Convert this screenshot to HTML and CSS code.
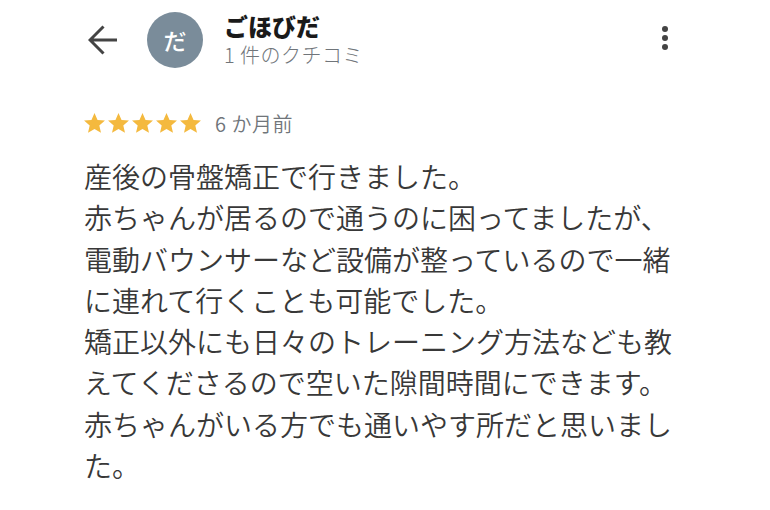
FILE: index.html
```html
<!DOCTYPE html>
<html lang="ja">
<head>
    <meta charset="UTF-8">
    <title>クチコミ</title>
    <link rel="stylesheet" href="styles.css">
</head>
<body>
    <div class="review-page">
        <header class="review-header">
            <button class="back-btn" aria-label="戻る">
                <svg width="30" height="30" viewBox="0 0 30 30"><path d="M2 15H29M15.5 1.5L2 15l13.5 13.5" fill="none" stroke="#444" stroke-width="3"/></svg>
            </button>
            <div class="avatar">だ</div>
            <div class="author">
                <div class="author-name">ごほびだ</div>
                <div class="author-meta">1 件のクチコミ</div>
            </div>
            <button class="more-btn" aria-label="メニュー">
                <span></span><span></span><span></span>
            </button>
        </header>

        <div class="rating-row">
            <div class="stars">
                <svg viewBox="1 1.5 22 22"><path d="M12 2.5l2.9 6.6 7.1.6-5.4 4.7 1.6 7-6.2-3.7-6.2 3.7 1.6-7L2 9.7l7.1-.6z"/></svg>
                <svg viewBox="1 1.5 22 22"><path d="M12 2.5l2.9 6.6 7.1.6-5.4 4.7 1.6 7-6.2-3.7-6.2 3.7 1.6-7L2 9.7l7.1-.6z"/></svg>
                <svg viewBox="1 1.5 22 22"><path d="M12 2.5l2.9 6.6 7.1.6-5.4 4.7 1.6 7-6.2-3.7-6.2 3.7 1.6-7L2 9.7l7.1-.6z"/></svg>
                <svg viewBox="1 1.5 22 22"><path d="M12 2.5l2.9 6.6 7.1.6-5.4 4.7 1.6 7-6.2-3.7-6.2 3.7 1.6-7L2 9.7l7.1-.6z"/></svg>
                <svg viewBox="1 1.5 22 22"><path d="M12 2.5l2.9 6.6 7.1.6-5.4 4.7 1.6 7-6.2-3.7-6.2 3.7 1.6-7L2 9.7l7.1-.6z"/></svg>
            </div>
            <span class="review-date">6 か月前</span>
        </div>

        <p class="review-text">産後の骨盤矯正で行きました。<br>赤ちゃんが居るので通うのに困ってましたが、<br>電動バウンサーなど設備が整っているので一緒に連れて行くことも可能でした。<br>矯正以外にも日々のトレーニング方法なども教えてくださるので空いた隙間時間にできます。<br>赤ちゃんがいる方でも通いやす所だと思いました。</p>
    </div>
</body>
</html>
```

FILE: styles.css
```css
:root {
    --text-dark: #383838;
    --text-grey: #70757a;
    --avatar-bg: #7a8c9a;
    --star-yellow: #f4b93e;
}

body, html {
    margin: 0;
    padding: 0;
    background: #ffffff;
    font-family: "Noto Sans CJK JP", "Noto Sans", sans-serif;
    color: var(--text-dark);
}

.review-page {
    padding: 12px 0 0 84px;
    width: 600px;
}

.review-header {
    display: flex;
    align-items: center;
    height: 56px;
}

.back-btn {
    background: none;
    border: none;
    padding: 0;
    margin: 0 28px 0 4px;
    width: 30px;
    height: 30px;
    display: flex;
}

.avatar {
    width: 56px;
    height: 56px;
    border-radius: 50%;
    background-color: var(--avatar-bg);
    color: #ffffff;
    font-size: 23px;
    font-weight: 500;
    display: flex;
    align-items: center;
    justify-content: center;
    flex-shrink: 0;
    margin-left: 1px;
}

.author {
    margin-left: 21px;
    flex: 1;
    margin-top: -2px;
    display: flex;
    flex-direction: column;
    gap: 2px;
}

.author-name {
    font-size: 24px;
    font-weight: 900;
    color: #1a1a1a;
    line-height: 30px;
}

.author-meta {
    font-size: 20px;
    font-weight: 300;
    color: var(--text-grey);
    line-height: 24px;
    letter-spacing: 0.5px;
}

.more-btn {
    background: none;
    border: none;
    padding: 0;
    display: flex;
    flex-direction: column;
    gap: 3px;
    margin-right: 16px;
    margin-top: -4px;
}

.more-btn span {
    width: 6px;
    height: 6px;
    border-radius: 50%;
    background: #444444;
}

.rating-row {
    display: flex;
    align-items: center;
    margin-top: 41px;
    height: 28px;
}

.stars {
    display: flex;
    gap: 1px;
    margin-left: -1px;
}

.stars svg {
    width: 23px;
    height: 23px;
    fill: var(--star-yellow);
}

.review-date {
    margin-left: 13px;
    font-size: 20px;
    font-weight: 350;
    color: var(--text-grey);
    letter-spacing: 0.5px;
}

.review-text {
    margin: 19px 0 0;
    font-size: 28px;
    font-weight: 350;
    line-height: 41.3px;
    color: var(--text-dark);
    width: 600px;
}
```
